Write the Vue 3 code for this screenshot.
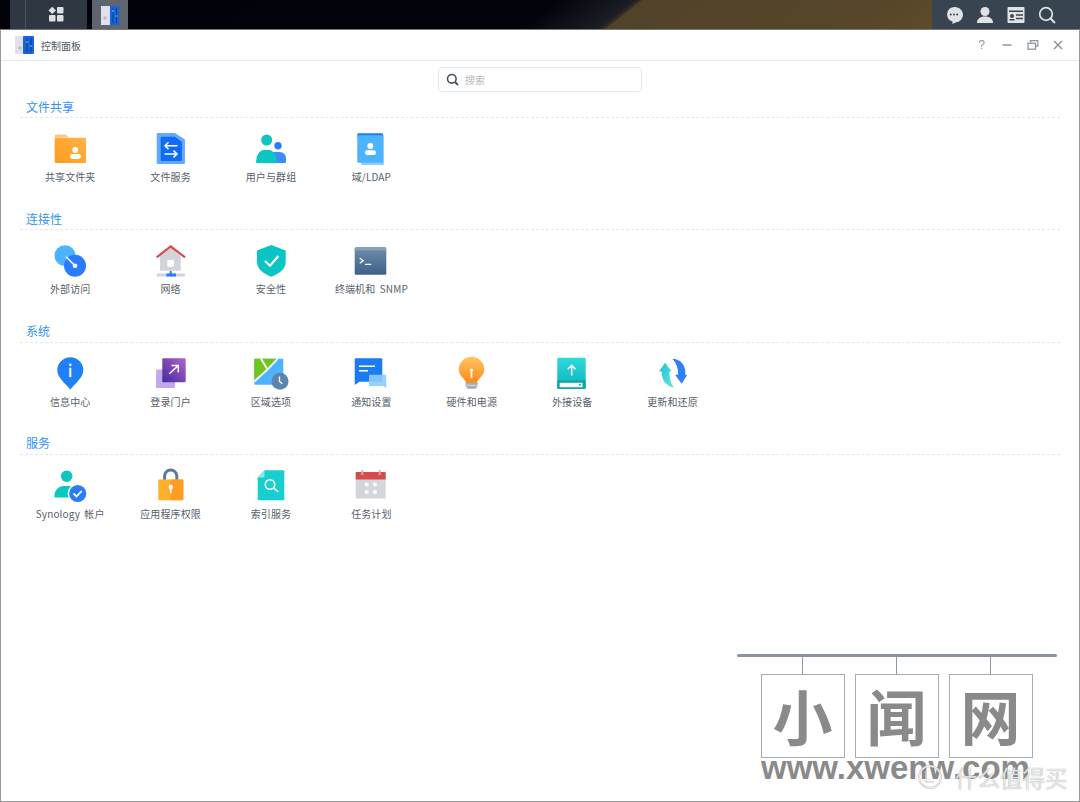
<script setup>
const icons = {
  folder: `<defs><linearGradient id="fo" x1="0" y1="1" x2="1" y2="0"><stop offset="0" stop-color="#ff9a1f"/><stop offset="1" stop-color="#ffb347"/></linearGradient></defs>
    <path d="M4.700 7a1.600 1.600 0 0 1 1.600-1.600h9.400l3 3h-14z" fill="#ffc682"/><rect x="4.700" y="8.800" width="31.300" height="25.200" rx="1" fill="url(#fo)"/>
    <circle cx="25.300" cy="21" r="2.900" fill="#fff"/><rect x="20" y="25" width="11" height="5" rx="2.400" fill="#fff"/>`,
  files: `<path d="M5.700 5.200A1.200 1.200 0 0 1 6.900 4h17l10 6.500v23.300a1.200 1.200 0 0 1-1.200 1.200H6.900a1.200 1.200 0 0 1-1.200-1.200z" fill="#62a8ff"/>
    <path d="M9.700 8.900a1.200 1.200 0 0 1 1.200-1.200h13l7 5.200v17.900a1.200 1.200 0 0 1-1.200 1.200H10.900a1.200 1.200 0 0 1-1.200-1.200z" fill="#0f6cf5"/>
    <path d="M26.500 16.700H14M17.500 13.300 14 16.700l3.500 3.400M13.500 25H26M22.500 21.600 26 25l-3.500 3.400" fill="none" stroke="#fff" stroke-width="1.500"/>`,
  users: `<circle cx="27" cy="16.700" r="3.700" fill="#2d7dfb"/><path d="M20 34V23h9a6 6 0 0 1 6 6v4a1 1 0 0 1-1 1z" fill="#3d8cff"/>
    <circle cx="15.700" cy="11" r="5.500" fill="#10c4c4"/><path d="M5 33a8 12 0 0 1 8-12h5a8 12 0 0 1 7.700 13H6a1 1 0 0 1-1-1z" fill="#0cc7c0"/>`,
  domain: `<rect x="10" y="6" width="23" height="30" rx="1" fill="#8fcfff"/><path d="M6.300 5.500a1.200 1.200 0 0 1 1.200-1.200h23.500a1 1 0 0 1 1 1V8H6.300z" fill="#1f7cf0"/>
    <rect x="6.300" y="6.300" width="25.700" height="27.500" rx="1" fill="#4db2ff"/><circle cx="19.300" cy="17" r="3" fill="#fff"/><rect x="14" y="21.300" width="11" height="4.700" rx="2.200" fill="#fff"/>`,
  external: `<circle cx="15" cy="14.700" r="10.500" fill="#4db2ff"/><circle cx="25" cy="24.700" r="11" fill="#2a7cff"/>
    <path d="M16 15.700 25 24.700" stroke="#fff" stroke-width="1.600"/><circle cx="25" cy="24.700" r="2.300" fill="#fff"/>`,
  network: `<path d="M9 15 19.700 6.500 29.700 15v14.700H9z" fill="#d1d4d9"/><path d="M5.700 16.300 19.700 5.500l14.300 10.800" fill="none" stroke="#db4b4b" stroke-width="2.200"/>
    <rect x="16.300" y="19" width="6.700" height="6.700" rx="1" fill="#fff"/><rect x="5.700" y="32.500" width="28.300" height="3" rx="0.500" fill="#d1d4d9"/>
    <path d="M18.700 30h2v2.500h4.300V35.500H15.400v-3h3.300z" fill="#2a7cff"/>`,
  shield: `<path d="M20.300 4 34.700 9.600V21c0 7-6.200 11.700-14.400 14.700C12.200 32.700 6 28 6 21V9.600z" fill="#0bc5c5"/><path d="m14 20 5 4.700 8.300-9.700" fill="none" stroke="#fff" stroke-width="2.200"/>`,
  terminal: `<defs><linearGradient id="te" x1="0" y1="0" x2="0" y2="1"><stop offset="0" stop-color="#6f8cab"/><stop offset="1" stop-color="#3e608a"/></linearGradient></defs>
    <rect x="3.700" y="6.300" width="31.600" height="27.400" rx="1.500" fill="url(#te)"/><path d="M3.700 9.500V7.800a1.500 1.500 0 0 1 1.500-1.500h28.600a1.500 1.500 0 0 1 1.500 1.500V9.500z" fill="#87a0ba"/>
    <path d="m8.700 17.300 3.600 2.500-3.600 2.500M14 23.300h6.300" fill="none" stroke="#fff" stroke-width="1.200"/>`,
  info: `<path d="M20.300 3.200a13 13 0 0 1 13 13c0 7.300-7.500 12.500-13 19.300-5.500-6.800-13-12-13-19.300a13 13 0 0 1 13-13z" fill="#1f80f8"/><circle cx="20.300" cy="10.700" r="1.300" fill="#fff"/><rect x="19.300" y="13.700" width="2" height="9.500" fill="#fff"/>`,
  portal: `<defs><linearGradient id="po" x1="0" y1="1" x2="1" y2="0"><stop offset="0" stop-color="#43299f"/><stop offset="1" stop-color="#b263cc"/></linearGradient></defs>
    <rect x="5" y="15.500" width="19" height="18.500" rx="1" fill="#c3a8ee"/><rect x="11.300" y="4.200" width="23.400" height="24" rx="1" fill="url(#po)"/>
    <path d="M18.300 19.800 27 11.700M20.500 11.500h6.800v6.800" fill="none" stroke="#fff" stroke-width="1.500"/>`,
  region: `<path d="M3.300 5.800a1 1 0 0 1 1-1h27a1 1 0 0 1 1 1v24a1 1 0 0 1-1 1h-27a1 1 0 0 1-1-1z" fill="#4db2ff"/>
    <path d="M3.300 5.800a1 1 0 0 1 1-1h22.200l-7 7.500-6.500 6.500-9.500 7.700H3.300z" fill="#6fc51d"/>
    <path d="M10 4.800 16.500 15.500M26.500 4.800 16.500 15.500 3.300 27.500" fill="none" stroke="#fff" stroke-width="1.800"/>
    <circle cx="29" cy="27.200" r="8.500" fill="#5c85ad"/><path d="M28.500 22.500v5l2.800 2.200" fill="none" stroke="#fff" stroke-width="1.300"/>`,
  notify: `<path d="M3.700 5.200a1 1 0 0 1 1-1h25.600a1 1 0 0 1 1 1v21.500a1 1 0 0 1-1 1H8.500l-4.800 3.400z" fill="#1c7af2"/>
    <path d="M18 21.800a1 1 0 0 1 1-1h15.300a1 1 0 0 1 1 1V34l-3.300-2H19a1 1 0 0 1-1-1z" fill="#8ecbff" opacity=".9"/>
    <path d="M8 12.200h16M8 16.700h9" stroke="#fff" stroke-width="1.500"/>`,
  bulb: `<defs><linearGradient id="bu" x1="0" y1="0" x2="0" y2="1"><stop offset="0" stop-color="#ffc561"/><stop offset="1" stop-color="#fd8a16"/></linearGradient></defs>
    <path d="M14 29c0-4-7.200-6.500-7.200-13.500a12.700 12.700 0 0 1 25.400 0c0 7-7.200 9.500-7.200 13.500z" fill="url(#bu)"/><path d="M13.500 28.500h12.300v3.300l-2 3h-8.300l-2-3z" fill="#a9adb3"/><path d="M13.500 31.300h12.300" stroke="#d9dbde" stroke-width="1"/>
    <circle cx="19.500" cy="16" r="1.500" fill="#fff"/><rect x="18.700" y="16" width="1.600" height="7.800" fill="#fff"/>`,
  device: `<defs><linearGradient id="de" x1="0" y1="0" x2="0" y2="1"><stop offset="0" stop-color="#2edada"/><stop offset="1" stop-color="#0cb2ba"/></linearGradient></defs>
    <rect x="5.300" y="3.800" width="28.400" height="31" rx="0.800" fill="url(#de)"/><rect x="5.300" y="26.500" width="28.400" height="8.300" fill="#0aa6ae"/>
    <rect x="7.700" y="28.800" width="22.800" height="4.400" fill="#fff"/><rect x="27" y="30" width="1.700" height="1.700" fill="#0aa6ae"/>
    <path d="M19.700 21.500V11.500M15.800 15.300l3.900-3.900 3.900 3.900" fill="none" stroke="#fff" stroke-width="1.500"/>`,
  update: `<defs><linearGradient id="up" x1="0" y1="0" x2="1" y2="1"><stop offset="0" stop-color="#10c6cc"/><stop offset="1" stop-color="#6fe3e6"/></linearGradient></defs>
    <path d="M12 8.800 18.700 17.500H16.500c-.3 6 1 11.500 4.500 16.300C13 32 8.500 26 8.800 17.500H6z" fill="url(#up)"/>
    <path d="M19.300 4.800c8 0 14 6.500 13 16h2L28.700 29.800 22 20.800h3c.5-6-1.500-11.500-5.700-16z" fill="#2e80fb"/>`,
  account: `<circle cx="16.700" cy="10.200" r="5.800" fill="#10c4c4"/><path d="M4.300 30a9 10 0 0 1 9-10h6a9 10 0 0 1 9 10v1.500H5.300a1 1 0 0 1-1-1z" fill="#0cc7c0"/>
    <circle cx="27.700" cy="27.500" r="10" fill="#fff"/><circle cx="27.700" cy="27.500" r="8.600" fill="#2a7cf8"/><path d="m23.500 27.500 3 3 5.200-5.500" fill="none" stroke="#fff" stroke-width="1.800"/>`,
  lock: `<path d="M13.600 14V10a6.100 6.100 0 0 1 12.200 0v4" fill="none" stroke="#567a9f" stroke-width="3"/>
    <rect x="7.300" y="13.500" width="25" height="20.700" rx="0.800" fill="#ffb02c"/><path d="M19.800 13.500h11.700a.8.800 0 0 1 .8.800v19.100a.8.800 0 0 1-.8.800H19.800z" fill="#ff9c21"/>
    <circle cx="19.800" cy="21" r="2.200" fill="#fff"/><rect x="19" y="21" width="1.600" height="6.500" fill="#fff"/>`,
  index: `<path d="M6.700 11.500 13.500 4.200h18.800a1 1 0 0 1 1 1v28a1 1 0 0 1-1 1H7.700a1 1 0 0 1-1-1z" fill="#17cfcf"/><path d="M6.700 11.500h5.800a1 1 0 0 0 1-1V4.200z" fill="#8be8e6"/>
    <circle cx="19" cy="18.500" r="4.700" fill="none" stroke="#fff" stroke-width="1.600"/><path d="m22.500 22 4.800 3.900" stroke="#fff" stroke-width="1.600"/>`,
  calendar: `<rect x="4.700" y="5.900" width="30" height="26.600" rx="1" fill="#d3d6db"/><path d="M4.700 13.500V6.900a1 1 0 0 1 1-1h28a1 1 0 0 1 1 1v6.600z" fill="#d94a4a"/>
    <path d="M11.300 4v5M28.700 4v5" stroke="#b5bac1" stroke-width="1.800"/>
    <circle cx="15.700" cy="18.500" r="2" fill="#fff"/><circle cx="24" cy="18.500" r="2" fill="#fff"/><circle cx="15.700" cy="25.900" r="2" fill="#fff"/><circle cx="24" cy="25.900" r="2" fill="#fff"/>`,
}

const sections = [
  { title: '文件共享', items: [
    { label: '共享文件夹', icon: 'folder' },
    { label: '文件服务', icon: 'files' },
    { label: '用户与群组', icon: 'users' },
    { label: '域/LDAP', icon: 'domain' },
  ] },
  { title: '连接性', items: [
    { label: '外部访问', icon: 'external' },
    { label: '网络', icon: 'network' },
    { label: '安全性', icon: 'shield' },
    { label: '终端机和 SNMP', icon: 'terminal' },
  ] },
  { title: '系统', items: [
    { label: '信息中心', icon: 'info' },
    { label: '登录门户', icon: 'portal' },
    { label: '区域选项', icon: 'region' },
    { label: '通知设置', icon: 'notify' },
    { label: '硬件和电源', icon: 'bulb' },
    { label: '外接设备', icon: 'device' },
    { label: '更新和还原', icon: 'update' },
  ] },
  { title: '服务', items: [
    { label: 'Synology 帐户', icon: 'account' },
    { label: '应用程序权限', icon: 'lock' },
    { label: '索引服务', icon: 'index' },
    { label: '任务计划', icon: 'calendar' },
  ] },
]

const signs = ['小', '闻', '网']
</script>

<template>
  <div class="desktop">
    <header class="taskbar">
      <div class="dock">
        <div class="dock-main">
          <span class="dock-edge"></span>
          <svg class="dock-grid" width="16" height="16" viewBox="0 0 16 16">
            <path d="M4.200 .8 8 4.400 4.200 8 .5 4.400z" fill="#dcdfe3" />
            <rect x="9" y="1" width="6.500" height="6.500" rx="1" fill="#dcdfe3" />
            <rect x="1" y="9" width="6.500" height="6.500" rx="1" fill="#dcdfe3" />
            <rect x="9" y="9" width="6.500" height="6.500" rx="1" fill="#dcdfe3" />
          </svg>
        </div>
        <div class="dock-active">
          <svg width="20" height="24" viewBox="0 0 20 24">
            <rect x="1" y="3" width="9" height="19" fill="#dfe2ee" />
            <circle cx="5" cy="15" r="1.800" fill="#b8bccb" />
            <rect x="10" y="3" width="9" height="19" fill="#1763d8" />
            <path d="M13 5v15M16.500 5v15" stroke="#0e3f9a" stroke-width="1" />
            <path d="M12 8h2M15.500 13h2" stroke="#52a0f5" stroke-width="1.500" />
          </svg>
        </div>
      </div>
      <div class="tray">
        <svg width="18" height="18" viewBox="0 0 18 18">
          <path d="M9 1a8 7.500 0 0 1 1.500 15.400L7.500 18v-2.500A8 7.500 0 0 1 9 1z" fill="#dfe3e6" />
          <circle cx="5.800" cy="8.500" r="1" fill="#3a4753" /><circle cx="9" cy="8.500" r="1" fill="#3a4753" /><circle cx="12.200" cy="8.500" r="1" fill="#3a4753" />
        </svg>
        <svg width="18" height="18" viewBox="0 0 18 18">
          <circle cx="9" cy="5.500" r="4.500" fill="#dfe3e6" />
          <path d="M1 17c0-4 3-6.500 8-6.500s8 2.500 8 6.500z" fill="#dfe3e6" />
        </svg>
        <svg width="18" height="18" viewBox="0 0 18 18">
          <rect x=".5" y="1" width="17" height="16" rx="1" fill="#dfe3e6" />
          <rect x="2" y="4.500" width="14" height="1.500" fill="#3a4753" />
          <circle cx="5" cy="10" r="2" fill="#3a4753" />
          <path d="M9 9h7M9 12.500h7" stroke="#3a4753" stroke-width="1.500" />
          <rect x="2.500" y="13" width="5" height="1.500" fill="#3a4753" />
        </svg>
        <svg width="18" height="18" viewBox="0 0 18 18">
          <circle cx="8" cy="8" r="6.300" fill="none" stroke="#dfe3e6" stroke-width="1.700" />
          <path d="m12.500 12.500 4.500 4.500" stroke="#dfe3e6" stroke-width="2" />
        </svg>
      </div>
    </header>

    <main class="window">
      <div class="titlebar">
        <svg class="app-icon" width="19" height="18" viewBox="0 0 19 18">
          <rect x="0" y="0" width="9" height="18" rx="1" fill="#dfe2ee" />
          <circle cx="5" cy="12" r="1.800" fill="#b8bccb" />
          <rect x="8" y="0" width="11" height="18" rx="1" fill="#1763d8" />
          <path d="M12 2v14M16 2v14" stroke="#0e3f9a" stroke-width="1" />
          <path d="M10.800 6h2.500M14.800 10h2.500" stroke="#79b8f7" stroke-width="1.200" />
        </svg>
        <span class="app-name">控制面板</span>
        <div class="win-controls">
          <span class="help">?</span>
          <svg width="12" height="12" viewBox="0 0 12 12"><path d="M1.500 6h9" stroke="#8c959e" stroke-width="1.500" /></svg>
          <svg width="12" height="12" viewBox="0 0 12 12">
            <rect x="1" y="4.200" width="7.500" height="6" fill="none" stroke="#8c959e" stroke-width="1.300" />
            <path d="M3.500 3.500V1.700h7.300v5.500H9" fill="none" stroke="#8c959e" stroke-width="1.200" />
          </svg>
          <svg width="12" height="12" viewBox="0 0 12 12"><path d="m2 2 8 8M10 2l-8 8" stroke="#8c959e" stroke-width="1.500" /></svg>
        </div>
      </div>

      <div class="search-row">
        <div class="search">
          <svg width="13" height="13" viewBox="0 0 13 13">
            <circle cx="5.800" cy="5.800" r="4.300" fill="none" stroke="#46525e" stroke-width="1.600" />
            <path d="m9 9 3 3" stroke="#46525e" stroke-width="1.800" />
          </svg>
          <span>搜索</span>
        </div>
      </div>

      <section v-for="sec in sections" :key="sec.title" class="group">
        <h2 class="group-title">{{ sec.title }}</h2>
        <div class="group-items">
          <div v-for="item in sec.items" :key="item.label" class="item">
            <svg class="icon" viewBox="0 0 40 40" v-html="icons[item.icon]"></svg>
            <span class="label">{{ item.label }}</span>
          </div>
        </div>
      </section>

      <div class="stamp">
        <div class="stamp-rail"></div>
        <div class="stamp-boards">
          <div v-for="ch in signs" :key="ch" class="board-wrap">
            <span class="board-hook"></span>
            <div class="board">{{ ch }}</div>
          </div>
        </div>
        <div class="stamp-url">www.xwenw.com</div>
      </div>
      <div class="credit">
        <svg width="26" height="26" viewBox="0 0 26 26">
          <circle cx="13" cy="13" r="11" fill="none" stroke="#c8c8c8" stroke-width="2" />
          <circle cx="13" cy="13" r="11" fill="none" stroke="#fff" stroke-opacity=".8" stroke-width="1" />
          <path d="M9 7v11h8" fill="none" stroke="#d8d8d8" stroke-width="1.400" />
        </svg>
        <span>什么值得买</span>
      </div>
    </main>
  </div>
</template>

<style scoped>
.desktop {
  width: 1080px;
  height: 802px;
  display: flex;
  flex-direction: column;
  overflow: hidden;
  position: relative;
  font-family: "Noto Sans CJK SC", "Noto Sans", sans-serif;
}

.taskbar {
  height: 29px;
  flex: none;
  display: flex;
  justify-content: space-between;
  background: linear-gradient(142deg, #02030a 0%, #03040b 50%, #1a1f24 56.800%, #3a2a20 57.300%, #51432a 57.600%, #574629 80%, #6a5530 100%);
}

.dock {
  display: flex;
  gap: 5px;
  padding-left: 10px;
}

.dock-main {
  width: 77px;
  display: flex;
  align-items: center;
  background: #2f3842;
}

.dock-edge {
  width: 15px;
  height: 100%;
  border-right: 1px solid #4a535c;
}

.dock-grid {
  margin-left: 22px;
  margin-top: -2px;
}

.dock-active {
  width: 36px;
  display: flex;
  align-items: center;
  justify-content: center;
  background: #5f656e;
}

.tray {
  width: 148px;
  box-sizing: border-box;
  display: flex;
  align-items: center;
  gap: 13px;
  padding-left: 13px;
  background: #38444f;
}

.window {
  flex: 1;
  position: relative;
  background: #fff;
  border: 1px solid #9a9a9a;
  border-top-color: #777;
  overflow: hidden;
}

.titlebar {
  height: 30px;
  display: flex;
  align-items: center;
  padding: 0 15px 0 14px;
  border-bottom: 1px solid #e8ebed;
}

.app-name {
  margin-left: 7px;
  font-size: 10px;
  color: #4f5862;
}

.win-controls {
  margin-left: auto;
  display: flex;
  align-items: center;
  gap: 13.500px;
}

.help {
  width: 12px;
  text-align: center;
  font-family: "Liberation Sans", sans-serif;
  font-size: 12px;
  line-height: 12px;
  color: #8c959e;
}

.search-row {
  display: flex;
  justify-content: center;
  padding-top: 6px;
  height: 33px;
  box-sizing: border-box;
}

.search {
  width: 204px;
  height: 25px;
  box-sizing: border-box;
  display: flex;
  align-items: center;
  gap: 6px;
  padding-left: 7px;
  border: 1px solid #e2e7eb;
  border-radius: 4px;
  font-size: 10px;
  color: #b4b9be;
}

.group {
  height: 112.330px;
  margin: 0 19px;
}

.group-title {
  margin: 0;
  height: 24px;
  box-sizing: border-box;
  padding: 4.500px 0 0 6px;
  font-size: 12px;
  line-height: 16px;
  font-weight: 400;
  color: #2f94f8;
  border-bottom: 1px dashed #e4e8ea;
}

.group-items {
  display: grid;
  grid-template-columns: repeat(auto-fill, 100.400px);
  padding-top: 11px;
}

.item {
  display: flex;
  flex-direction: column;
  align-items: center;
}

.icon {
  width: 40px;
  height: 40px;
  display: block;
}

.label {
  margin-top: 1px;
  font-size: 10px;
  line-height: 14px;
  letter-spacing: 0.120px;
  word-spacing: 2px;
  color: #58616b;
  white-space: nowrap;
}

.stamp {
  position: absolute;
  left: 736px;
  top: 624px;
  width: 320px;
}

.stamp-rail {
  height: 3px;
  border-radius: 2px;
  background: #8a93a0;
}

.stamp-boards {
  display: flex;
  gap: 10px;
  padding-left: 23.500px;
}

.board-wrap {
  display: flex;
  flex-direction: column;
  align-items: center;
}

.board-hook {
  width: 1.500px;
  height: 17px;
  background: #8f98a3;
}

.board {
  width: 84px;
  height: 84px;
  box-sizing: border-box;
  border: 1.500px solid #a3abb5;
  padding-bottom: 3px;
  display: flex;
  align-items: center;
  justify-content: center;
  font-size: 60px;
  font-weight: 700;
  color: #8a8a8a;
  line-height: 1;
}

.stamp-url {
  margin-top: -6px;
  padding-left: 24px;
  font-family: "Liberation Sans", sans-serif;
  font-size: 33px;
  line-height: 32px;
  font-weight: 700;
  color: #8a8a8a;
  white-space: nowrap;
}

.credit {
  position: absolute;
  left: 916px;
  top: 734px;
  display: flex;
  align-items: center;
  gap: 12px;
  font-size: 22.500px;
  line-height: 26px;
  color: rgba(255, 255, 255, 0.75);
  text-shadow: 0 0 1px rgba(130, 130, 130, 0.9);
  white-space: nowrap;
}
</style>
